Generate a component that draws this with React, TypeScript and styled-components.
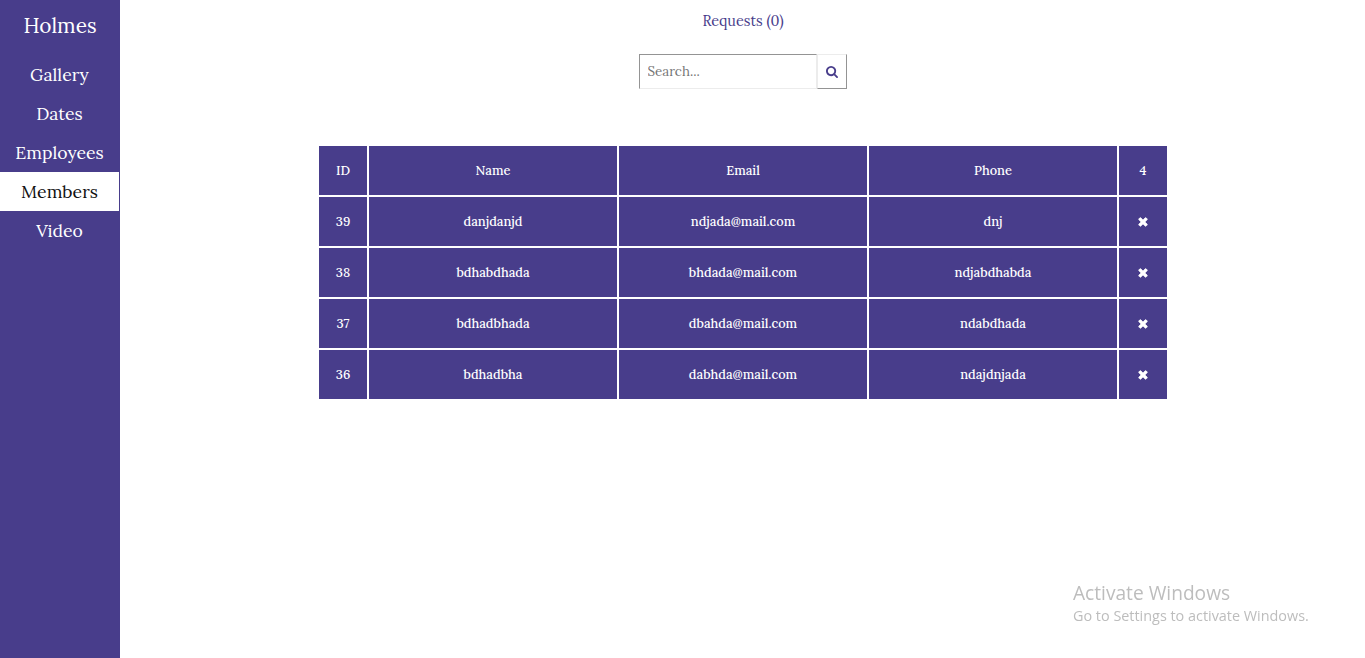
import React from 'react';
import styled, { createGlobalStyle } from 'styled-components';

const purple = '#483d8b';

const GlobalStyle = createGlobalStyle`
  * { box-sizing: border-box; }
  body {
    margin: 0;
    background: #fff;
    overflow: hidden;
    font-family: Lora, "Liberation Serif", serif;
  }
`;

const Page = styled.div`
  display: flex;
  height: 100vh;
`;

const Sidebar = styled.nav`
  width: 120px;
  flex: none;
  background: ${purple};
  border-right: 1px solid ${purple};
  color: #fff;
  text-align: center;
`;

const Brand = styled.div`
  height: 55px;
  padding-left: 1px;
  line-height: 52px;
  font-size: 20.8px;
`;

const NavItem = styled.a<{ $active?: boolean }>`
  display: block;
  height: 39px;
  line-height: 40px;
  font-size: 17.6px;
  color: ${p => (p.$active ? '#111' : '#fff')};
  background: ${p => (p.$active ? '#fff' : 'transparent')};
`;

const Main = styled.main`
  flex: 1;
  display: flex;
  flex-direction: column;
  align-items: center;
`;

const Requests = styled.a`
  margin-top: 10px;
  padding-left: 1px;
  height: 22px;
  line-height: 22px;
  font-size: 14.4px;
  color: ${purple};
`;

const SearchForm = styled.form`
  display: flex;
  margin-top: 22px;
  height: 35px;
`;

const SearchInput = styled.input`
  width: 178px;
  padding: 0 8px;
  border: 1px solid;
  border-color: #949494 #ececec #ececec #949494;
  border-radius: 0;
  outline: none;
  font: 13.33px Lora, "Liberation Serif", serif;
  &::placeholder { color: #757575; }
`;

const SearchButton = styled.button`
  width: 30px;
  padding: 0;
  display: flex;
  align-items: center;
  justify-content: center;
  background: #fff;
  border: 1px solid;
  border-color: #ececec #949494 #949494 #ececec;
  color: ${purple};
`;

const Table = styled.div`
  display: grid;
  grid-template-columns: 48px 248px 248px 248px 48px;
  grid-auto-rows: 49px;
  gap: 2px;
  margin-top: 57px;
`;

const Cell = styled.div`
  display: flex;
  align-items: center;
  justify-content: center;
  padding-left: 1px;
  background: ${purple};
  color: #fff;
  font-size: 12.8px;
  font-weight: 500;
`;

const IconCell = styled(Cell)`
  padding-left: 0;
`;

const Watermark = styled.aside`
  position: fixed;
  left: 1073px;
  top: 581px;
  color: #bdbdbd;
  font-family: "Segoe UI", "Open Sans", sans-serif;
  white-space: nowrap;
`;

const WatermarkTitle = styled.div`
  font-size: 19.15px;
  line-height: 24px;
`;

const WatermarkText = styled.div`
  font-size: 14.4px;
  line-height: 21px;
`;

const SearchIcon = () => (
  <svg width="12" height="12" viewBox="64 128 1664 1664" fill="currentColor">
    <path d="M1216 832q0-185-131.5-316.5t-316.5-131.5-316.5 131.5-131.5 316.5 131.5 316.5 316.5 131.5 316.5-131.5 131.5-316.5zm512 832q0 52-38 90t-90 38q-54 0-90-38l-343-342q-179 124-399 124-143 0-273.5-55.5t-225-150-150-225-55.5-273.5 55.5-273.5 150-225 225-150 273.5-55.5 273.5 55.5 225 150 150 225 55.5 273.5q0 220-124 399l343 343q37 37 37 90z" />
  </svg>
);

const RemoveIcon = () => (
  <svg width="14" height="13" viewBox="0 0 1792 1792" fill="currentColor" stroke="currentColor" strokeWidth="90">
    <path d="M1490 1322q0 40-28 68l-136 136q-28 28-68 28t-68-28l-294-294-294 294q-28 28-68 28t-68-28l-136-136q-28-28-28-68t28-68l294-294-294-294q-28-28-28-68t28-68l136-136q28-28 68-28t68 28l294 294 294-294q28-28 68-28t68 28l136 136q28 28 28 68t-28 68l-294 294 294 294q28 28 28 68z" />
  </svg>
);

const links = [
  { label: 'Gallery' },
  { label: 'Dates' },
  { label: 'Employees' },
  { label: 'Members', active: true },
  { label: 'Video' },
];

const headings = ['ID', 'Name', 'Email', 'Phone', '4'];

const members = [
  ['39', 'danjdanjd', 'ndjada@mail.com', 'dnj'],
  ['38', 'bdhabdhada', 'bhdada@mail.com', 'ndjabdhabda'],
  ['37', 'bdhadbhada', 'dbahda@mail.com', 'ndabdhada'],
  ['36', 'bdhadbha', 'dabhda@mail.com', 'ndajdnjada'],
];

export default function App() {
  return (
    <Page>
      <GlobalStyle />
      <Sidebar>
        <Brand>Holmes</Brand>
        {links.map(l => (
          <NavItem key={l.label} $active={l.active}>{l.label}</NavItem>
        ))}
      </Sidebar>
      <Main>
        <Requests>Requests (0)</Requests>
        <SearchForm>
          <SearchInput placeholder="Search..." />
          <SearchButton type="button" aria-label="Search"><SearchIcon /></SearchButton>
        </SearchForm>
        <Table>
          {headings.map(text => <Cell key={text}>{text}</Cell>)}
          {members.map(row => (
            <React.Fragment key={row[0]}>
              {row.map(text => <Cell key={text}>{text}</Cell>)}
              <IconCell><RemoveIcon /></IconCell>
            </React.Fragment>
          ))}
        </Table>
      </Main>
      <Watermark>
        <WatermarkTitle>Activate Windows</WatermarkTitle>
        <WatermarkText>Go to Settings to activate Windows.</WatermarkText>
      </Watermark>
    </Page>
  );
}
